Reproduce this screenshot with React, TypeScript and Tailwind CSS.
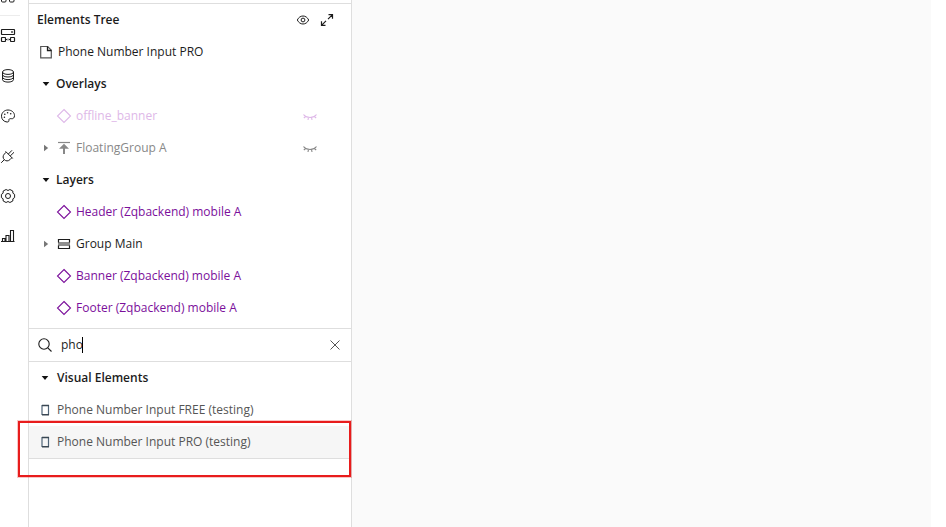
import { useState } from 'react';
import type { ReactNode, SVGProps } from 'react';

function Icon({ children, ...props }: SVGProps<SVGSVGElement>) {
  return (
    <svg
      viewBox="0 0 16 16"
      width={16}
      height={16}
      fill="none"
      stroke="currentColor"
      strokeWidth={1}
      aria-hidden="true"
      className="shrink-0"
      {...props}
    >
      {children}
    </svg>
  );
}

const GridIcon = () => (
  <Icon>
    <rect x="1.5" y="2.5" width="4.5" height="4.5" />
    <rect x="9.5" y="2.5" width="4.5" height="4.5" />
    <rect x="1.5" y="10.5" width="4.5" height="4.5" rx="1" />
    <rect x="9.5" y="10.5" width="4.5" height="4.5" rx="1" />
  </Icon>
);

const BackendIcon = () => (
  <Icon strokeWidth={1.2}>
    <rect x="1.5" y="1.5" width="13" height="5" rx="0.5" />
    <path d="M12 3v2" />
    <rect x="1.5" y="9.5" width="4" height="4" rx="0.5" />
    <rect x="10.5" y="9.5" width="4" height="4" rx="0.5" />
    <path d="M5.5 11.5h1.5M9 11.5h1.5" />
    <path d="M8 10.500v2" strokeWidth="0.8" />
  </Icon>
);

const DatabaseIcon = () => (
  <Icon>
    <ellipse cx="8" cy="4" rx="5.5" ry="2.4" />
    <path d="M2.5 4v7.700c0 1.3 2.4 2.4 5.500 2.4s5.500-1.100 5.500-2.400V4" />
    <path d="M2.5 6.600C2.5 7.900 4.900 9 8 9s5.500-1.100 5.500-2.400M2.500 9.200c0 1.300 2.400 2.400 5.500 2.400s5.500-1.100 5.500-2.400" />
  </Icon>
);

const PaletteIcon = () => (
  <Icon>
    <path d="M7 14C3.900 13.800 1.500 11.300 1.500 8.200 1.500 4.700 4.400 2 8 2s6.500 2.400 6.500 5.600c0 2.300-1.500 3.400-3.200 3.100-1.600-.3-2.700.4-2.400 1.700.3 1-.6 1.700-1.900 1.600Z" />
    <g fill="currentColor" stroke="none">
      <circle cx="4.400" cy="9.300" r=".8" />
      <circle cx="4.800" cy="6.300" r=".8" />
      <circle cx="7.600" cy="4.700" r=".8" />
      <circle cx="10.700" cy="5.700" r=".8" />
    </g>
  </Icon>
);

const PlugIcon = () => (
  <Icon>
    <path d="M5.500 3.300l7.200 7.200M6.300 4.100L4.300 6.100C2.700 7.900 2.700 10 4.300 11.700 6 13.300 8.100 13.300 9.900 11.700l2-2" />
    <path d="M8.300 6.100l3.700-3.800M10.200 8l3.800-3.700M4.300 11.700L1.200 14.800" />
  </Icon>
);

const GearIcon = () => (
  <Icon>
    <path
      d="M14.600 6.400v3.200L12.900 10.800l-.1 2.200-2.900 1.500L8 13.500l-1.900 1L3.200 13l-.1-2.200L1.400 9.600V6.400L3.100 5.200 3.200 3l2.900-1.500L8 2.500l1.900-1L12.800 3l.1 2.200Z"
      strokeLinejoin="round"
    />
    <circle cx="8" cy="8" r="2.500" />
  </Icon>
);

const ChartIcon = () => (
  <Icon strokeWidth={1.1}>
    <path d="M2.500 13.500v-3h2.500v3M6 13.500v-6h3v6M10.500 13.500v-11h3v11M1 13.500h13.500" />
  </Icon>
);

const EyeIcon = () => (
  <Icon>
    <path d="M2.300 8C3.600 5.400 5.600 4 8 4s4.400 1.400 5.700 4c-1.300 2.600-3.300 4-5.700 4S3.600 10.600 2.300 8Z" />
    <circle cx="8" cy="8" r="1.900" />
  </Icon>
);

const ExpandIcon = () => (
  <Icon strokeWidth={1.2}>
    <path d="M9.500 2.700h4v4M6.500 13.300h-4v-4M13.500 2.700L9 7.200M2.500 13.300L7 8.800" />
  </Icon>
);

const HiddenIcon = () => (
  <Icon strokeWidth={1.1}>
    <path d="M1.500 6.500c1.500 2 3.700 3 6.500 3s5-1 6.500-3M4 8.300L1.800 10M6.500 9.300L6 12M9.500 9.300l.5 2.700M12 8.300l2.200 1.700" />
  </Icon>
);

const DiamondIcon = () => (
  <Icon strokeWidth={1.1}>
    <path d="M8 1.500L14.500 8 8 14.500 1.500 8Z" />
  </Icon>
);

const FloatingIcon = () => (
  <Icon strokeWidth={1.200}>
    <path d="M2 2.500h12" />
    <path d="M8 7v7" strokeWidth="2" />
    <path d="M8 3.800l5 5H3Z" fill="currentColor" stroke="none" />
  </Icon>
);

const GroupIcon = () => (
  <Icon strokeWidth={1.200}>
    <path d="M2 6h12v4H2Z" fill="#8f8f8f" stroke="none" />
    <path d="M2.500 6.500v-3h11v3M2.500 9.500v3h11v-3" />
  </Icon>
);

const PageIcon = () => (
  <Icon viewBox="0 0 12 16" width={12}>
    <path d="M.7 2.500h7l3.600 3.700v7.600H.7Z" stroke="#555" strokeWidth="1.200" />
    <path d="M7.500 2.500v4h4" strokeWidth="1.300" />
  </Icon>
);

const PhoneIcon = () => (
  <Icon viewBox="0 0 12 16" width={12}>
    <path d="M3 3v10M9.500 3v10" stroke="#4f6478" strokeWidth="1.200" />
    <path d="M3 3.500h7M3 12.700h7" stroke="#3a4753" strokeWidth="1.500" />
  </Icon>
);

const Arrow = ({ open }: { open: boolean }) => (
  <Icon viewBox="0 0 12 16" width={12} stroke="none">
    {open ? (
      <path d="M2.700 6h6.600L6 10Z" fill="#111" />
    ) : (
      <path d="M4 4.800v6.400L8.200 8Z" fill="#777" />
    )}
  </Icon>
);

const railItems = [
  { label: 'Backend', icon: <BackendIcon /> },
  { label: 'Data', icon: <DatabaseIcon /> },
  { label: 'Styles', icon: <PaletteIcon /> },
  { label: 'Plugins', icon: <PlugIcon /> },
  { label: 'Settings', icon: <GearIcon /> },
  { label: 'Logs', icon: <ChartIcon /> },
];

interface TreeItem {
  name: string;
  icon: ReactNode;
  tone: string;
  group?: boolean;
  hidden?: boolean;
}

const overlays: TreeItem[] = [
  { name: 'offline_banner', icon: <DiamondIcon />, tone: 'text-[#deb8e8]', hidden: true },
  { name: 'FloatingGroup A', icon: <FloatingIcon />, tone: 'text-[#888888]', group: true, hidden: true },
];

const layers: TreeItem[] = [
  { name: 'Header (Zqbackend) mobile A', icon: <DiamondIcon />, tone: 'text-[#7b0f9b]' },
  { name: 'Group Main', icon: <GroupIcon />, tone: 'text-[#1c1c1c]', group: true },
  { name: 'Banner (Zqbackend) mobile A', icon: <DiamondIcon />, tone: 'text-[#7b0f9b]' },
  { name: 'Footer (Zqbackend) mobile A', icon: <DiamondIcon />, tone: 'text-[#7b0f9b]' },
];

const results = ['Phone Number Input FREE (testing)', 'Phone Number Input PRO (testing)'];

function TreeRow({ item }: { item: TreeItem }) {
  return (
    <li className={`flex h-8 items-center pr-[33px] pl-[11px] ${item.tone}`}>
      <span className="w-4 shrink-0">{item.group && <Arrow open={false} />}</span>
      <button className="flex flex-1 items-center gap-1 text-left">
        {item.icon}
        {item.name}
      </button>
      {item.hidden && (
        <button aria-label={`Show ${item.name}`}>
          <HiddenIcon />
        </button>
      )}
    </li>
  );
}

function TreeSection({ title, items }: { title: string; items: TreeItem[] }) {
  const [open, setOpen] = useState(true);

  return (
    <section>
      <button
        onClick={() => setOpen(!open)}
        className="flex h-8 w-full items-center gap-1 pl-[11px] font-semibold"
      >
        <Arrow open={open} />
        {title}
      </button>
      {open && (
        <ul>
          {items.map((item) => (
            <TreeRow key={item.name} item={item} />
          ))}
        </ul>
      )}
    </section>
  );
}

export default function App() {
  const [query, setQuery] = useState('pho');

  return (
    <div className="flex h-screen overflow-hidden bg-white pr-[15px] font-['Open_Sans',sans-serif] text-[12px] leading-4 text-[#1c1c1c]">
      {/* Tool rail */}
      <nav className="-mt-[25px] flex w-7 shrink-0 flex-col">
        <button aria-label="Design" className="flex h-10 w-5 items-center">
          <GridIcon />
        </button>
        <div className="w-5 border-t border-[#ececec]" />
        {railItems.map((item) => (
          <button key={item.label} aria-label={item.label} className="flex h-10 w-5 items-center">
            {item.icon}
          </button>
        ))}
      </nav>

      <aside className="relative w-[324px] shrink-0 border-x border-[#dedede] pt-[3px]">
        {/* Elements tree */}
        <div className="border-y border-[#dedede] pb-1">
          <header className="flex h-8 items-center gap-2 pr-4 pl-2">
            <h2 className="flex-1 font-semibold">Elements Tree</h2>
            <button aria-label="Toggle visibility">
              <EyeIcon />
            </button>
            <button aria-label="Expand tree">
              <ExpandIcon />
            </button>
          </header>
          <button className="flex h-8 w-full items-center gap-[6px] pl-[11px]">
            <PageIcon />
            Phone Number Input PRO
          </button>
          <TreeSection title="Overlays" items={overlays} />
          <TreeSection title="Layers" items={layers} />
        </div>

        {/* Search */}
        <label className="relative flex h-[33px] items-center gap-2 border-b border-[#dedede] px-2">
          <Icon strokeWidth={1.1}>
            <circle cx="7" cy="7" r="5.200" />
            <path d="M10.800 10.800L14.500 14.500" />
          </Icon>
          <input
            type="text"
            aria-label="Search elements"
            value={query}
            onChange={(e) => setQuery(e.target.value)}
            className="min-w-0 flex-1 caret-transparent outline-none"
          />
          {/* Text cursor */}
          <span className="pointer-events-none absolute left-8 flex items-center">
            <span className="invisible whitespace-pre">{query}</span>
            <span className="-ml-px h-4 w-px bg-black" />
          </span>
          <button aria-label="Clear search" onClick={() => setQuery('')}>
            <Icon stroke="#555">
              <path d="M3.500 3.500l9 9M12.500 3.500l-9 9" />
            </Icon>
          </button>
        </label>

        {/* Search results */}
        <section className="border-b border-[#dedede]">
          <h3 className="flex h-8 items-center gap-[6px] pl-[10px] font-semibold">
            <Arrow open />
            Visual Elements
          </h3>
          <ul>
            {results.map((name, i) => (
              <li key={name} className={i === 1 ? 'bg-[#f6f6f6]' : ''}>
                <button className="flex h-8 w-full items-center gap-[6px] pl-[10px] text-[#555555]">
                  <PhoneIcon />
                  {name}
                </button>
              </li>
            ))}
          </ul>
        </section>

        {/* Highlight frame */}
        <div className="pointer-events-none absolute top-[421px] right-0 -left-[11px] h-14 border-2 border-[#e81c1c] ring-1 ring-[#e81c1c]/25" />
      </aside>

      <main className="flex-1 bg-[#fafafa]" />
    </div>
  );
}
